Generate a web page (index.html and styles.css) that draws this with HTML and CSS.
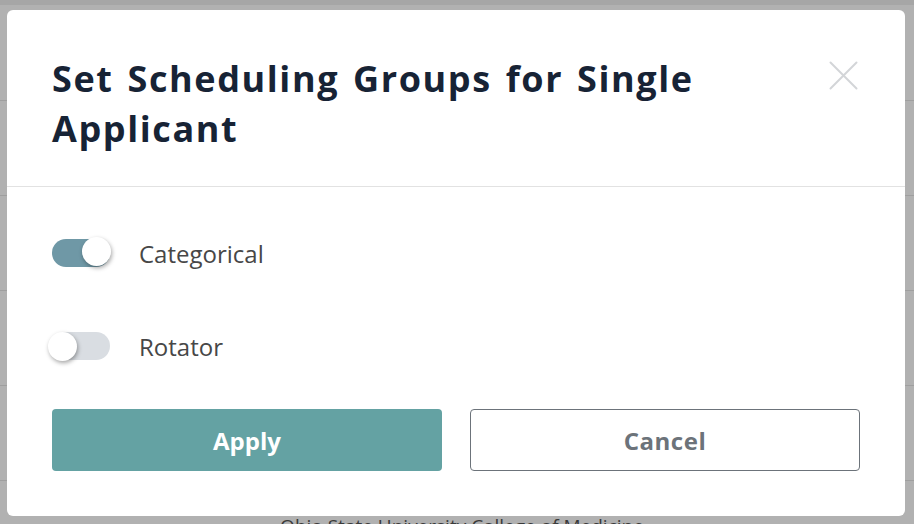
FILE: index.html
```html
<!DOCTYPE html>
<html lang="en">
<head>
<meta charset="utf-8">
<title>Set Scheduling Groups</title>
<link rel="stylesheet" href="styles.css">
</head>
<body>
<div class="page">
  <div class="topband"></div>
  <div class="row"></div>
  <div class="row"></div>
  <div class="row"></div>
  <div class="row"></div>
  <div class="row"></div>
  <div class="row last"><span class="school">Ohio State University College of Medicine</span></div>
</div>
<div class="modal">
  <div class="modal-header">
    <h1 class="modal-title">Set Scheduling Groups for Single Applicant</h1>
    <button class="close" aria-label="Close">
      <svg width="29" height="29" viewBox="0 0 29 29"><path d="M1.5 1.5 L27.5 27.5 M27.5 1.5 L1.5 27.5" stroke="#d3d5d8" stroke-width="2" stroke-linecap="round" fill="none"/></svg>
    </button>
  </div>
  <div class="modal-body">
    <div class="option">
      <span class="switch on"><span class="knob"></span></span>
      <span class="label">Categorical</span>
    </div>
    <div class="option">
      <span class="switch"><span class="knob"></span></span>
      <span class="label">Rotator</span>
    </div>
    <div class="actions">
      <button class="btn btn-apply">Apply</button>
      <button class="btn btn-cancel">Cancel</button>
    </div>
  </div>
</div>
</body>
</html>
```
FILE: styles.css
```css
html, body {
  margin: 0;
  padding: 0;
}
body {
  width: 914px;
  height: 524px;
  overflow: hidden;
  background: #b1b1b1;
  font-family: "Open Sans", Lato, sans-serif;
  position: relative;
}
.page {
  display: flex;
  flex-direction: column;
  height: 524px;
  overflow: hidden;
}
.topband {
  height: 5px;
  flex: none;
  background: #a6a6a6;
}
.row {
  height: 94px;
  flex: none;
  border-bottom: 1px solid #9f9f9f;
  display: flex;
  justify-content: center;
}
.row:nth-child(2) { height: 95px; }
.school {
  margin-top: 32px;
  font-size: 19px;
  color: #3a3a3a;
  margin-left: 10px;
}
.modal {
  position: absolute;
  left: 7px;
  top: 10px;
  width: 898px;
  height: 506px;
  background: #fff;
  border-radius: 6px;
  display: flex;
  flex-direction: column;
  box-sizing: border-box;
}
.modal-header {
  height: 177px;
  box-sizing: border-box;
  border-bottom: 1px solid #e2e2e2;
  padding: 44px 47px 0 45px;
  display: flex;
  justify-content: space-between;
  align-items: flex-start;
}
.modal-title {
  margin: 0;
  font-size: 36px;
  line-height: 50px;
  font-weight: 700;
  letter-spacing: 1.6px;
  word-spacing: 3px;
  color: #172335;
  width: 720px;
}
.close {
  border: 0;
  background: none;
  padding: 0;
  margin-top: 7px;
  width: 29px;
  height: 29px;
}
.close svg { display: block; }
.modal-body {
  padding: 52px 45px 0 45px;
  display: flex;
  flex-direction: column;
}
.option {
  display: flex;
  align-items: center;
  height: 28px;
  margin-bottom: 65px;
}
.option + .option {
  margin-bottom: 49px;
}
.switch {
  position: relative;
  width: 58px;
  height: 28px;
  border-radius: 14px;
  background: #d9dde2;
  flex: none;
}
.switch.on { background: #6f98a6; }
.knob {
  position: absolute;
  top: 0;
  left: -4px;
  width: 29px;
  height: 29px;
  border-radius: 50%;
  background: #fff;
  box-shadow: 1px 2px 4px rgba(0,0,0,0.35);
}
.switch.on .knob {
  left: 30px;
  top: -2px;
}
.label {
  margin-left: 29px;
  font-size: 24px;
  color: #474747;
}
.actions {
  display: flex;
  gap: 28px;
}
.btn {
  width: 390px;
  height: 62px;
  border-radius: 4px;
  font-family: "Open Sans", sans-serif;
  font-size: 24px;
  font-weight: 700;
  box-sizing: border-box;
}
.btn-apply {
  background: #64a2a3;
  color: #fff;
  border: 0;
}
.btn-cancel {
  background: #fff;
  color: #6c737a;
  border: 1px solid #6c737a;
  letter-spacing: 0.5px;
}
```
